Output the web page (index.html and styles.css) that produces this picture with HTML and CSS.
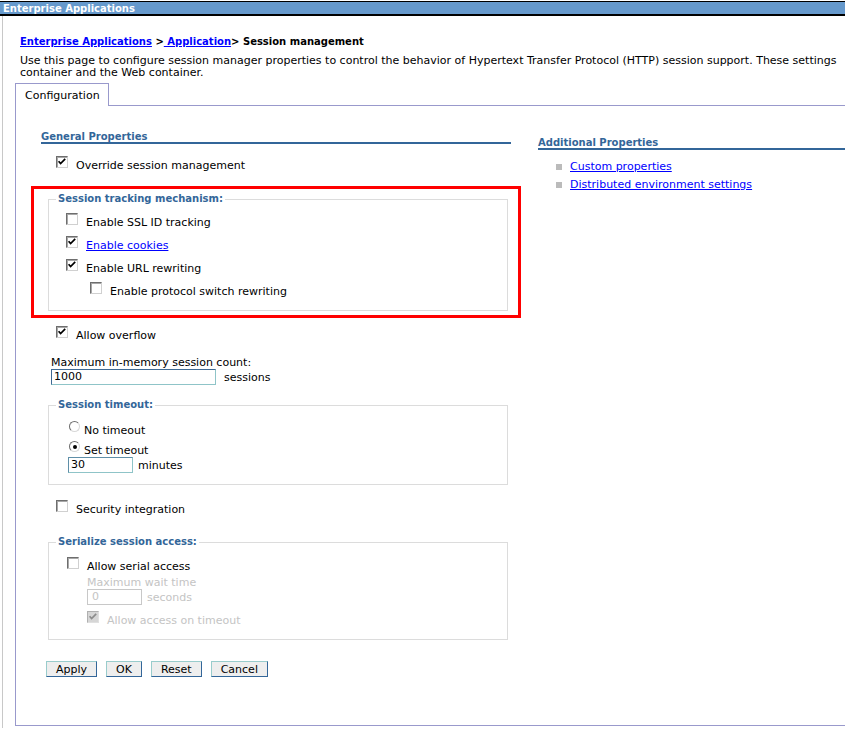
FILE: index.html
```html
<!DOCTYPE html>
<html>
<head>
<meta charset="utf-8">
<title>Session management</title>
<link rel="stylesheet" href="styles.css">
</head>
<body>
<div class="page">
  <div class="titlebar">Enterprise Applications</div>
  <div class="main">
    <div class="crumbs"><a href="#">Enterprise Applications</a> &gt;<a href="#">&nbsp;Application</a>&gt; Session management</div>
    <div class="desc">
      <span class="line">Use this page to configure session manager properties to control the behavior of Hypertext Transfer Protocol (HTTP) session support. These settings</span>
      <span class="line">container and the Web container.</span>
    </div>
    <div class="tabs">
      <div class="tab">Configuration</div>
      <div class="tabfill"></div>
    </div>
    <div class="panel">
      <div class="col-left">
        <h2 class="sect">General Properties</h2>
        <div class="row ind-top"><span class="cb"><svg viewBox="0 0 10 10"><path d="M1.6 4.3 L3.6 6.6 L8.2 1.9"/></svg></span><span>Override session management</span></div>

        <div class="highlight">
          <fieldset class="group tracking">
            <legend>Session tracking mechanism:</legend>
            <div class="row in1"><span class="cb"></span><span>Enable SSL ID tracking</span></div>
            <div class="row in1"><span class="cb"><svg viewBox="0 0 10 10"><path d="M1.6 4.3 L3.6 6.6 L8.2 1.9"/></svg></span><a href="#">Enable cookies</a></div>
            <div class="row in1"><span class="cb"><svg viewBox="0 0 10 10"><path d="M1.6 4.3 L3.6 6.6 L8.2 1.9"/></svg></span><span>Enable URL rewriting</span></div>
            <div class="row in2"><span class="cb"></span><span>Enable protocol switch rewriting</span></div>
          </fieldset>
        </div>

        <div class="row ind-top overflow"><span class="cb"><svg viewBox="0 0 10 10"><path d="M1.6 4.3 L3.6 6.6 L8.2 1.9"/></svg></span><span>Allow overflow</span></div>

        <div class="field-label">Maximum in-memory session count:</div>
        <div class="inline-field count"><span class="input wide">1000</span><span class="unit">sessions</span></div>

        <fieldset class="group timeout">
          <legend>Session timeout:</legend>
          <div class="radio-row"><span class="radio"></span><span>No timeout</span></div>
          <div class="radio-row second"><span class="radio on"></span><span>Set timeout</span></div>
          <div class="inline-field mins"><span class="input small">30</span><span class="unit">minutes</span></div>
        </fieldset>

        <div class="row ind-top security"><span class="cb"></span><span>Security integration</span></div>

        <fieldset class="group serialize">
          <legend>Serialize session access:</legend>
          <div class="row in1b"><span class="cb"></span><span>Allow serial access</span></div>
          <div class="disabled-block">
            <div class="field-label dis">Maximum wait time</div>
            <div class="inline-field wait"><span class="input tiny dis">0</span><span class="unit dis">seconds</span></div>
            <div class="row dis-row"><span class="cb disabled"><svg viewBox="0 0 10 10"><path d="M1.6 4.3 L3.6 6.6 L8.2 1.9"/></svg></span><span class="dis">Allow access on timeout</span></div>
          </div>
        </fieldset>

        <div class="buttons">
          <span class="btn">Apply</span>
          <span class="btn">OK</span>
          <span class="btn">Reset</span>
          <span class="btn">Cancel</span>
        </div>
      </div>
      <div class="col-right">
        <h2 class="sect">Additional Properties</h2>
        <ul class="links">
          <li><a href="#">Custom properties</a></li>
          <li><a href="#">Distributed environment settings</a></li>
        </ul>
      </div>
    </div>
  </div>
</div>
</body>
</html>
```
FILE: styles.css
```css
html, body {
  margin: 0;
  padding: 0;
  background: #fff;
}
body {
  font-family: "DejaVu Sans", Verdana, sans-serif;
  font-size: 11px;
  color: #000;
}
a {
  color: #0000ff;
  text-decoration: underline;
}
.page {
  width: 845px;
  overflow: hidden;
  padding-top: 1px;
}
.titlebar {
  height: 12px;
  line-height: 14px;
  background: #6699cc;
  border-top: 1px solid #000;
  border-bottom: 2px solid #000;
  color: #fff;
  font-weight: bold;
  font-size: 10px;
  padding-left: 3px;
  white-space: nowrap;
}
.main {
  margin-left: 2px;
  border-left: 1px solid #c8c8c8;
  padding: 19px 0 2px 12px;
}
.crumbs {
  margin-left: 5px;
  font-size: 10px;
  font-weight: bold;
  line-height: 13px;
  white-space: nowrap;
}
.desc {
  margin: 6px 0 0 5px;
  line-height: 12px;
}
.desc .line {
  display: block;
  white-space: nowrap;
  padding-top: 1px;
  height: 11px;
  line-height: 12px;
}
.tabs {
  display: flex;
  margin-top: 5px;
  width: 900px;
}
.tab {
  border: 1px solid #9999cc;
  border-bottom: none;
  height: 22px;
  line-height: 23px;
  padding: 0 8px 0 9px;
  white-space: nowrap;
}
.tabfill {
  flex: 1;
  border-bottom: 1px solid #9999cc;
}
.panel {
  display: flex;
  width: 898px;
  border: 1px solid #9999cc;
  border-top: none;
  padding: 0 0 48px 25px;
  box-sizing: border-box;
}
.col-left {
  width: 470px;
  padding-top: 25px;
  display: flex;
  flex-direction: column;
  align-items: flex-start;
}
.col-right {
  width: 320px;
  margin-left: 27px;
  padding-top: 31px;
}
.sect {
  margin: 0;
  font-size: 10px;
  font-weight: bold;
  color: #336699;
  line-height: 11px;
  border-bottom: 2px solid #336699;
  align-self: stretch;
}
.row {
  display: flex;
  align-items: flex-start;
  line-height: 20px;
  height: 18px;
  white-space: nowrap;
}
.cb {
  box-sizing: border-box;
  width: 12px;
  height: 12px;
  margin-right: 8px;
  border: 1px solid;
  border-color: #6e6e6e #d0d0d0 #d0d0d0 #6e6e6e;
  box-shadow: inset 1px 1px 0 #a8a8a8;
  background: #fff;
  flex: none;
  display: flex;
  align-items: center;
  justify-content: center;
}
.cb svg {
  width: 10px;
  height: 10px;
}
.cb svg path {
  fill: none;
  stroke: #000;
  stroke-width: 1.7;
}
.cb.disabled {
  background: #d6d6d6;
  border-color: #b0b0b0 #e0e0e0 #e0e0e0 #b0b0b0;
  box-shadow: none;
}
.cb.disabled svg path {
  stroke: #8c8c8c;
}
.ind-top {
  margin: 12px 0 0 15px;
}
.highlight {
  margin: 12px 0 0 -10px;
  width: 490px;
  box-sizing: border-box;
  border: 3px solid #ff0000;
  padding: 4px 10px 4px 14px;
}
.group {
  margin: 0;
  width: 460px;
  box-sizing: border-box;
  border: 1px solid #dcdcdc;
  padding: 8px 7px 10px 7px;
  min-width: 0;
}
.group legend {
  font-size: 10px;
  font-weight: bold;
  color: #336699;
  line-height: 12px;
  padding: 0 2px;
}
.tracking .row + .row {
  margin-top: 5px;
}
.in1 {
  margin-left: 10px;
}
.in2 {
  margin-left: 34px;
}
.in1b {
  margin-left: 11px;
}
.overflow {
  margin-top: 8px;
}
.field-label {
  margin: 12px 0 0 10px;
  line-height: 13px;
  white-space: nowrap;
}
.inline-field {
  display: flex;
  align-items: center;
  white-space: nowrap;
}
.input {
  box-sizing: border-box;
  height: 16px;
  line-height: 14px;
  border: 1px solid;
  border-color: #3f6a94 #8fc4c8 #8fc4c8 #3f6a94;
  padding-left: 2px;
  background: #fff;
}
.count {
  margin-left: 10px;
}
.input.wide {
  width: 165px;
}
.count .unit {
  margin-left: 8px;
}
.timeout {
  margin: 14px 0 0 7px;
  padding: 10px 7px 11px 7px;
}
.radio-row {
  display: flex;
  align-items: flex-start;
  line-height: 19px;
  height: 16px;
  margin-left: 13px;
  white-space: nowrap;
}
.radio-row.second {
  margin-top: 4px;
}
.radio {
  box-sizing: border-box;
  width: 11px;
  height: 11px;
  border-radius: 50%;
  border: 1px solid;
  border-color: #6e6e6e #d8d8d8 #d8d8d8 #6e6e6e;
  background: #fff;
  margin-right: 4px;
  flex: none;
  display: flex;
  align-items: center;
  justify-content: center;
}
.radio.on::after {
  content: "";
  width: 4px;
  height: 4px;
  border-radius: 50%;
  background: #000;
}
.mins {
  margin-left: 12px;
}
.input.small {
  width: 65px;
  border-color: #5f8fa8 #8fc4c8 #8fc4c8 #5f8fa8;
}
.mins .unit {
  margin-left: 5px;
}
.security {
  margin-top: 15px;
}
.serialize {
  margin: 18px 0 0 7px;
  padding: 9px 7px 10px 7px;
}
.disabled-block {
  margin-left: 31px;
}
.disabled-block .field-label {
  margin: 1px 0 0 0;
}
.dis {
  color: #c4c4c4;
}
.input.tiny {
  width: 55px;
  border-color: #c8c8c8;
  padding-left: 4px;
}
.wait .unit {
  margin-left: 5px;
}
.dis-row {
  margin-top: 6px;
}
.buttons {
  display: flex;
  gap: 9px;
  margin: 21px 0 0 5px;
}
.btn {
  box-sizing: border-box;
  height: 16px;
  line-height: 15px;
  padding: 0 9px;
  background: #eeeeee;
  border: 1px solid;
  border-color: #99cccc #336699 #336699 #99cccc;
  white-space: nowrap;
}
.links {
  list-style: none;
  margin: 8px 0 0 0;
  padding: 0 0 0 18px;
}
.links li {
  display: flex;
  align-items: center;
  line-height: 18px;
  white-space: nowrap;
}
.links li::before {
  content: "";
  width: 6px;
  height: 6px;
  background: #bbbbbb;
  margin-right: 8px;
  flex: none;
}
```
